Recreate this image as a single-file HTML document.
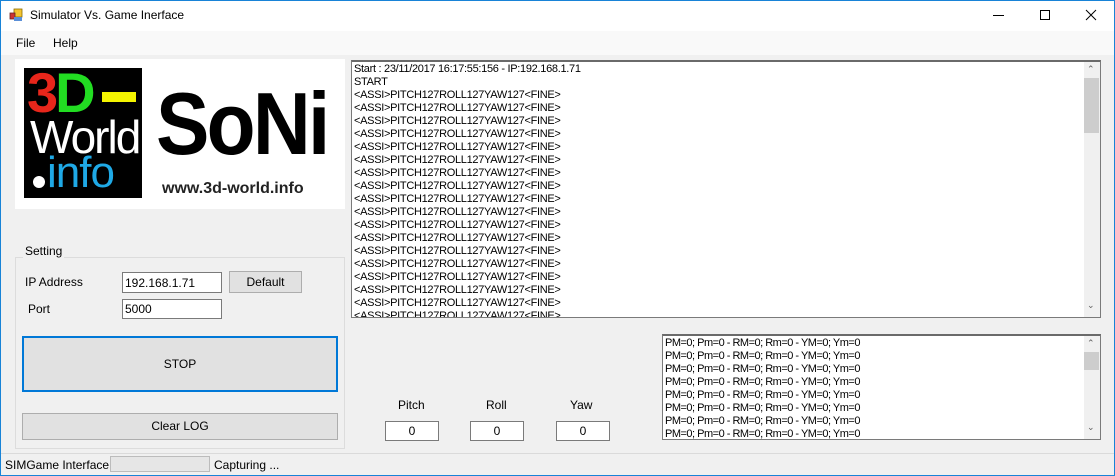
<!DOCTYPE html>
<html><head><meta charset="utf-8"><style>
*{margin:0;padding:0;box-sizing:border-box}
body{width:1115px;height:476px;overflow:hidden;background:#f0f0f0;font-family:"Liberation Sans",sans-serif;font-size:12px;color:#000;position:relative}
.a{position:absolute}
.win{left:0;top:0;width:1115px;height:476px;border:1px solid #1883d7}
.tb{left:1px;top:1px;width:1113px;height:30px;background:#fff}
.menu{left:1px;top:31px;width:1113px;height:24px;background:#f9f9f9}
.tx{background:#fff;border:1px solid #7a7a7a}
.btn{background:#e1e1e1;border:1px solid #adadad;text-align:center}
.log{font-size:11px;line-height:13px;white-space:pre;overflow:hidden;letter-spacing:-0.3px}
</style></head><body>
<div class="a win"></div>
<div class="a tb"></div>
<svg class="a" style="left:9px;top:8px" width="14" height="14"><rect x="5" y="1" width="8" height="8" fill="#f4c430" stroke="#8a6d00" stroke-width=".8"/><rect x="1" y="5" width="5" height="6" fill="#c33" stroke="#622" stroke-width=".8"/><rect x="5" y="9" width="8" height="4" fill="#5a8fd8"/></svg>
<div class="a" style="left:30px;top:8px;font-size:12px">Simulator Vs. Game Inerface</div>
<div class="a" style="left:993px;top:15px;width:11px;height:1px;background:#000"></div>
<div class="a" style="left:1040px;top:10px;width:10px;height:10px;border:1px solid #000"></div>
<svg class="a" style="left:1085px;top:9px" width="12" height="12"><path d="M1 1L11 11M11 1L1 11" stroke="#000" stroke-width="1"/></svg>
<div class="a menu"></div>
<div class="a" style="left:16px;top:36px">File</div>
<div class="a" style="left:53px;top:36px">Help</div>

<div class="a" style="left:15px;top:59px;width:330px;height:150px;background:#fff"></div>
<div class="a" style="left:24px;top:68px;width:118px;height:130px;background:#000;overflow:hidden">
<div class="a" style="left:3px;top:-4px;font:bold 56px/58px 'Liberation Sans',sans-serif;letter-spacing:-3px"><span style="color:#e8261b">3</span><span style="color:#22dd22">D</span></div>
<div class="a" style="left:78px;top:24px;width:34px;height:10px;background:#f5f500"></div>
<div class="a" style="left:6px;top:44px;color:#fff;font:46px/50px 'Liberation Sans',sans-serif;letter-spacing:-2px">World</div>
<div class="a" style="left:9px;top:108px;width:12px;height:12px;border-radius:50%;background:#fff"></div>
<div class="a" style="left:23px;top:82px;color:#1fa9e6;font:44px/46px 'Liberation Sans',sans-serif;letter-spacing:-1px">info</div>
</div>
<div class="a" style="left:156px;top:80px;font:bold 88px/88px 'Liberation Sans',sans-serif;letter-spacing:-3px;transform:scaleX(0.91);transform-origin:left">SoNi</div>
<div class="a" style="left:162px;top:180px;font:bold 16px/18px 'Liberation Sans',sans-serif;color:#222">www.3d-world.info</div>

<div class="a" style="left:15px;top:257px;width:330px;height:192px;border:1px solid #dcdcdc"></div>
<div class="a" style="left:23px;top:244px;background:#f0f0f0;padding:0 2px">Setting</div>
<div class="a" style="left:25px;top:275px">IP Address</div>
<div class="a" style="left:28px;top:302px">Port</div>
<div class="a tx" style="left:122px;top:272px;width:100px;height:21px;padding:3px 2px">192.168.1.71</div>
<div class="a tx" style="left:122px;top:299px;width:100px;height:20px;padding:2px 2px">5000</div>
<div class="a btn" style="left:229px;top:271px;width:73px;height:22px;line-height:20px">Default</div>
<div class="a btn" style="left:22px;top:336px;width:316px;height:56px;line-height:52px;border:2px solid #0078d7">STOP</div>
<div class="a btn" style="left:22px;top:413px;width:316px;height:27px;line-height:25px">Clear LOG</div>

<div class="a tx log" style="left:351px;top:60px;width:750px;height:258px;border-top:2px solid #6a6a6a;padding:1px 2px">Start : 23/11/2017 16:17:55:156 - IP:192.168.1.71
START
&lt;ASSI&gt;PITCH127ROLL127YAW127&lt;FINE&gt;
&lt;ASSI&gt;PITCH127ROLL127YAW127&lt;FINE&gt;
&lt;ASSI&gt;PITCH127ROLL127YAW127&lt;FINE&gt;
&lt;ASSI&gt;PITCH127ROLL127YAW127&lt;FINE&gt;
&lt;ASSI&gt;PITCH127ROLL127YAW127&lt;FINE&gt;
&lt;ASSI&gt;PITCH127ROLL127YAW127&lt;FINE&gt;
&lt;ASSI&gt;PITCH127ROLL127YAW127&lt;FINE&gt;
&lt;ASSI&gt;PITCH127ROLL127YAW127&lt;FINE&gt;
&lt;ASSI&gt;PITCH127ROLL127YAW127&lt;FINE&gt;
&lt;ASSI&gt;PITCH127ROLL127YAW127&lt;FINE&gt;
&lt;ASSI&gt;PITCH127ROLL127YAW127&lt;FINE&gt;
&lt;ASSI&gt;PITCH127ROLL127YAW127&lt;FINE&gt;
&lt;ASSI&gt;PITCH127ROLL127YAW127&lt;FINE&gt;
&lt;ASSI&gt;PITCH127ROLL127YAW127&lt;FINE&gt;
&lt;ASSI&gt;PITCH127ROLL127YAW127&lt;FINE&gt;
&lt;ASSI&gt;PITCH127ROLL127YAW127&lt;FINE&gt;
&lt;ASSI&gt;PITCH127ROLL127YAW127&lt;FINE&gt;
&lt;ASSI&gt;PITCH127ROLL127YAW127&lt;FINE&gt;</div>
<div class="a" style="left:1084px;top:62px;width:16px;height:255px;background:#f0f0f0"></div>
<div class="a" style="left:1084px;top:78px;width:15px;height:55px;background:#cdcdcd"></div>
<div class="a" style="left:1087px;top:64px;font-size:9px;color:#606060">&#8963;</div>
<div class="a" style="left:1087px;top:300px;font-size:9px;color:#606060">&#8964;</div>

<div class="a" style="left:398px;top:398px">Pitch</div>
<div class="a" style="left:486px;top:398px">Roll</div>
<div class="a" style="left:570px;top:398px">Yaw</div>
<div class="a tx" style="left:385px;top:421px;width:54px;height:20px;text-align:center;line-height:18px">0</div>
<div class="a tx" style="left:470px;top:421px;width:54px;height:20px;text-align:center;line-height:18px">0</div>
<div class="a tx" style="left:556px;top:421px;width:54px;height:20px;text-align:center;line-height:18px">0</div>

<div class="a tx log" style="left:662px;top:334px;width:439px;height:106px;border-top:2px solid #6a6a6a;padding:1px 2px;letter-spacing:-0.5px">PM=0; Pm=0 - RM=0; Rm=0 - YM=0; Ym=0
PM=0; Pm=0 - RM=0; Rm=0 - YM=0; Ym=0
PM=0; Pm=0 - RM=0; Rm=0 - YM=0; Ym=0
PM=0; Pm=0 - RM=0; Rm=0 - YM=0; Ym=0
PM=0; Pm=0 - RM=0; Rm=0 - YM=0; Ym=0
PM=0; Pm=0 - RM=0; Rm=0 - YM=0; Ym=0
PM=0; Pm=0 - RM=0; Rm=0 - YM=0; Ym=0
PM=0; Pm=0 - RM=0; Rm=0 - YM=0; Ym=0</div>
<div class="a" style="left:1084px;top:336px;width:16px;height:103px;background:#f0f0f0"></div>
<div class="a" style="left:1084px;top:352px;width:15px;height:18px;background:#cdcdcd"></div>
<div class="a" style="left:1087px;top:338px;font-size:9px;color:#606060">&#8963;</div>
<div class="a" style="left:1087px;top:422px;font-size:9px;color:#606060">&#8964;</div>

<div class="a" style="left:1px;top:453px;width:1113px;height:1px;background:#dadada"></div>
<div class="a" style="left:5px;top:458px">SIMGame Interface</div>
<div class="a" style="left:110px;top:456px;width:100px;height:16px;background:#e6e6e6;border:1px solid #bcbcbc"></div>
<div class="a" style="left:214px;top:458px">Capturing ...</div>
</body></html>
